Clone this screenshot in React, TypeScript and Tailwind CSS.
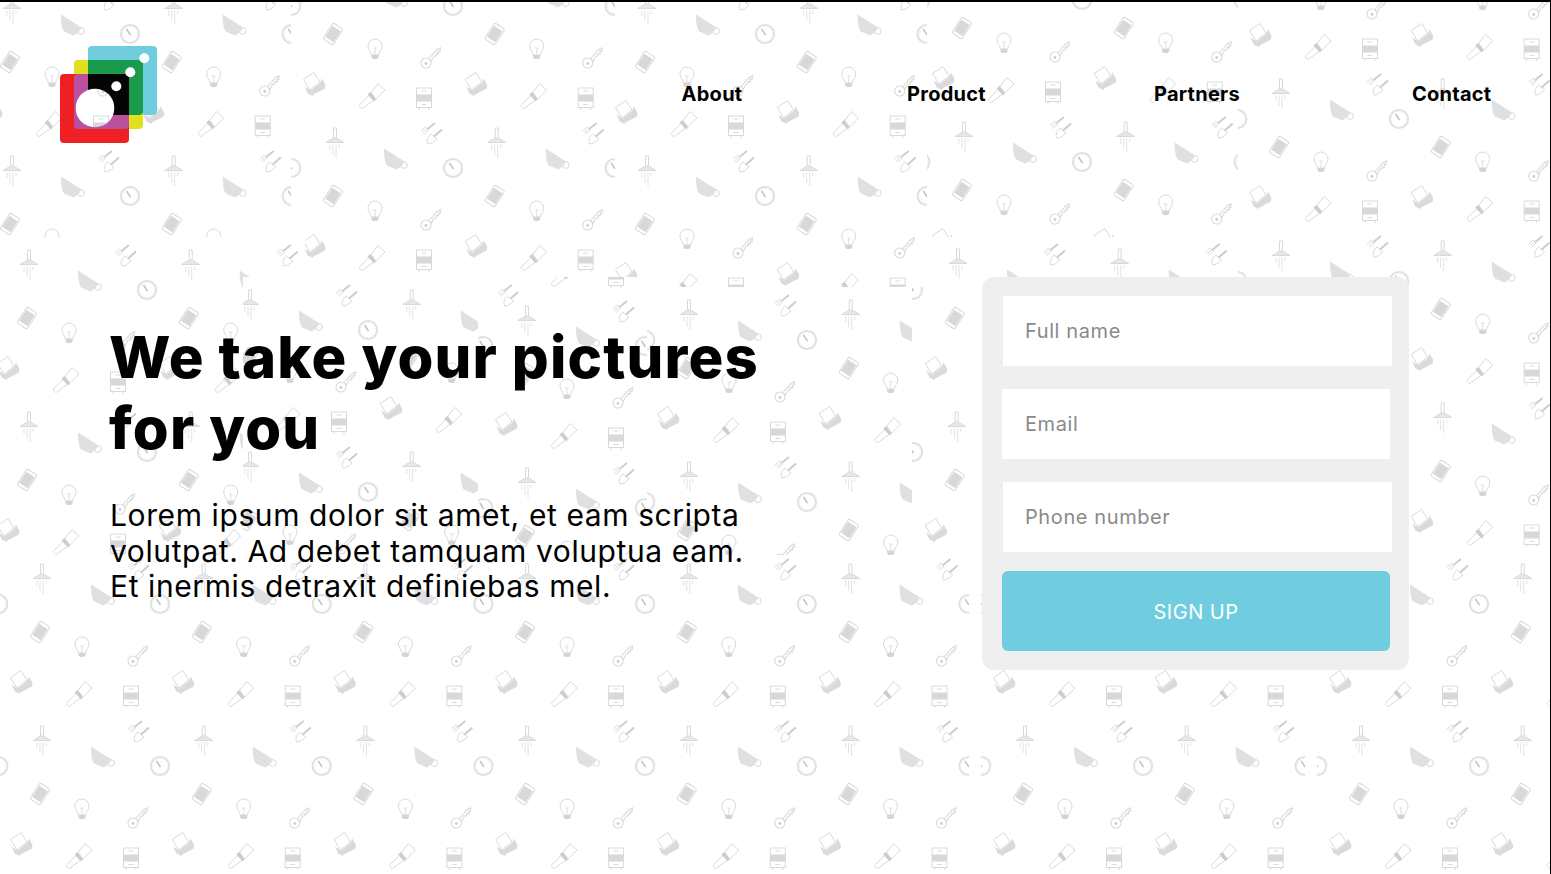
const PERIOD_X = 161.7;
const PERIOD_Y = 162;

// x0, y0, x1, y1, gaugeX, gaugeY: the wallpaper is pieced together, each patch has its own offset
const patches = [
  [0, 0, 291, 237, 130, 34],
  [0, 237, 305, 277, 147, 290],
  [0, 277, 243, 555, 147, 290],
  [291, 0, 615, 237, 453, 6],
  [305, 237, 615, 277, 453, 6],
  [243, 277, 478, 555, 368, 330],
  [478, 277, 518, 312, 368, 330],
  [518, 277, 647, 555, 645, 346],
  [478, 312, 518, 555, 645, 346],
  [615, 0, 647, 277, 765, 34],
  [647, 0, 927, 287, 765, 34],
  [647, 287, 912, 555, 807, 340],
  [912, 287, 968, 555, 913, 452],
  [927, 0, 1238, 237, 1082, 162],
  [927, 237, 1238, 287, 1076, 289],
  [1238, 0, 1551, 553, 1399, 119],
  [0, 555, 969, 874, 160, 766],
  [981, 553, 1305, 874, 1143, 766],
  [1317, 553, 1551, 874, 1479, 766],
];

const tileIcons: [string, number, number][] = [
  ["gauge", 0, 0],
  ["cup", -58, -9],
  ["phone", -120, -134],
  ["bulb", -78, -119],
  ["key", -22, -110],
  ["printer", -139, -84],
  ["brush", -81, -72],
  ["fridge", -29, -70],
  ["shower", -118, -29],
  ["garden", -22, -34],
];

const FILL = "#dcddde";
const LINE = "#d4d5d7";

function IconDefs() {
  return (
    <defs>
      <g id="gauge" fill="none">
        <circle r="9.2" stroke={FILL} strokeWidth="1.8" fill="#fff" />
        <circle r="7.6" stroke={LINE} strokeWidth="0.6" strokeDasharray="1 1.4" />
        <path d="M-3.5 -5 L0.5 1" stroke="#b9babc" strokeWidth="1.4" />
      </g>
      <g id="cup">
        <circle cx="9" cy="6" r="3.4" fill="#fff" stroke={LINE} strokeWidth="1" />
        <path d="M-11 -10.5 L9.5 2.5 C8 6 4.5 9 1.5 10.5 L-8 6.5 C-10.5 2.5 -11 -3.5 -11 -10.5Z" fill={FILL} />
      </g>
      <g id="phone" transform="rotate(33)">
        <rect x="-6" y="-9.5" width="12" height="19" rx="1.8" fill="#fff" stroke={LINE} strokeWidth="1" />
        <rect x="-5" y="-6.5" width="10" height="13" fill="#d3d4d6" />
      </g>
      <g id="bulb">
        <path d="M-3.5 6 C-4 2.5 -7 1 -7 -3 A7 7 0 1 1 7 -3 C7 1 4 2.5 3.5 6Z" fill="#fff" stroke={LINE} strokeWidth="1" />
        <path d="M0 6 V-1 M-1.8 -1 H1.8" stroke={LINE} strokeWidth="0.8" fill="none" />
        <path d="M-3.5 6 H3.5 V8.5 L2 10 H-2 L-3.5 8.5Z" fill="#cfd0d2" />
      </g>
      <g id="key" fill="#fff" stroke={LINE} strokeWidth="1.1">
        <path d="M-2.5 1 L6 -8.5 L9.5 -10 L9 -6.5 L7.2 -6.8 L7.6 -4.2 L5.2 -4.6 L5.2 -2 L3 -2 L0.5 3Z" />
        <circle cx="-5" cy="5" r="5" />
        <circle cx="-5" cy="5.5" r="1.4" fill="#c9cacc" stroke="none" />
      </g>
      <g id="printer">
        <path d="M-9.5 2.5 L-3.5 6.5 L6 -1 L8 -5.5 L11.5 1 L11 4.5 L-0.5 10.5 L-1.5 12 L-4 10.5 L-6 10Z" fill="#d6d7d8" />
        <path d="M-10.5 -4.5 L0 -11.5 L6 -2 L-4 6Z" fill="#fff" stroke={LINE} strokeWidth="1" />
      </g>
      <g id="brush">
        <path d="M-3.5 0 L-12 8.5 C-13.5 10 -11 13.5 -9 12 L1 4.5" fill="#fff" stroke={LINE} strokeWidth="1" />
        <path d="M-4.5 -1.5 L-1 -4.5 L5 2 L2 5.5Z" fill="#c6c7c9" />
        <path d="M-1 -3.5 L6 -12.5 L13 -6 L4 3Z" fill="#fff" stroke={LINE} strokeWidth="1" />
      </g>
      <g id="fridge">
        <rect x="-7.5" y="-10" width="15" height="19.5" fill="#fff" stroke={LINE} strokeWidth="1" />
        <rect x="-7.5" y="-3.5" width="15" height="7" fill="#d3d4d6" />
        <path d="M-2.5 -7 H2.5 M-2.5 6.5 H2.5 M-5 9.5 V12 M5 9.5 V12" stroke={LINE} strokeWidth="0.9" />
      </g>
      <g id="shower" fill="none" stroke={LINE} strokeWidth="1">
        <path d="M-1.5 -1 V-11 H1.5 V-1" fill="#fff" />
        <path d="M-9 3.5 L-1.5 -1 H1.5 L9 3.5Z" fill="#e4e5e6" />
        <path d="M-5 5.5 V11 M-2 5.5 V16 M1 5.5 V19 M4 5.5 V9" strokeWidth="0.8" />
      </g>
      <g id="garden" fill="none">
        <path d="M-5.5 -7 L-10 -3 M-4 -5.5 L-8.5 -1 M-2.5 -4 L-7 0.5 M-5.5 -7 L-2.5 -4" stroke="#cfd0d2" strokeWidth="0.9" />
        <path d="M-3.5 -5 L4 -11" stroke="#c6c7c9" strokeWidth="1.8" />
        <path d="M-3 10 C-5 7 -3 2 0 0 L6 5 C3 8 0 10 -3 10Z" fill="#fff" stroke={LINE} strokeWidth="1" />
        <path d="M3 2.5 L11 -4.5" stroke="#c6c7c9" strokeWidth="2" />
      </g>
    </defs>
  );
}

function Wallpaper() {
  return (
    <svg className="absolute left-0 top-[-2px] opacity-90" width="1551" height="874" viewBox="0 0 1551 874">
      <IconDefs />
      {patches.map(([x0, y0, x1, y1, gx, gy], p) => {
        const uses = [];
        for (let i = -11; i <= 11; i++) {
          for (let j = -6; j <= 6; j++) {
            for (const [id, ox, oy] of tileIcons) {
              const x = gx + ox + i * PERIOD_X;
              const y = gy + oy + j * PERIOD_Y;
              if (x < x0 - 25 || x > x1 + 25 || y < y0 - 25 || y > y1 + 25) continue;
              uses.push(<use key={`${id}${i}_${j}`} href={`#${id}`} x={x} y={y} />);
            }
          }
        }
        return (
          <g key={p}>
            <clipPath id={`patch${p}`}>
              <rect x={x0} y={y0} width={x1 - x0} height={y1 - y0} />
            </clipPath>
            <g clipPath={`url(#patch${p})`}>{uses}</g>
          </g>
        );
      })}
    </svg>
  );
}

function Logo() {
  return (
    <svg width="97" height="97" viewBox="60 46 97 97">
      <mask id="holes">
        <rect x="60" y="46" width="97" height="97" fill="#fff" />
        <circle cx="95" cy="108" r="19.3" fill="#000" />
        <circle cx="116.3" cy="86.3" r="5" fill="#000" />
        <circle cx="130.3" cy="72.3" r="5" fill="#000" />
        <circle cx="144.3" cy="58.3" r="5" fill="#000" />
      </mask>
      <g mask="url(#holes)">
        <rect x="88" y="46" width="69" height="69" rx="4" fill="#6fcddd" />
        <rect x="74" y="60" width="69" height="69" rx="4" fill="#e0e01f" />
        <rect x="60" y="74" width="69" height="69" rx="4" fill="#ee2024" />
        <path d="M88 60 H143 V111 a4 4 0 0 1 -4 4 H88Z" fill="#1a9a4b" />
        <path d="M78 74 H129 V125 a4 4 0 0 1 -4 4 H78 a4 4 0 0 1 -4 -4 V78 a4 4 0 0 1 4 -4Z" fill="#b9519e" />
        <path d="M88 74 H125 a4 4 0 0 1 4 4 V115 H88Z" fill="#050505" />
      </g>
    </svg>
  );
}

const inputClass =
  "block h-[69.5px] bg-white text-[20px] font-normal tracking-[0.6px] text-[#8a8a8a] placeholder:text-[#8a8a8a] outline-none";

export default function App() {
  return (
    <div className="relative h-[874px] w-[1551px] overflow-hidden border-t-2 border-r border-black bg-white font-['Inter',sans-serif] text-black">
      <Wallpaper />
      <div className="relative flex flex-col">
        <header className="flex items-start pl-[60px] pt-[44px]">
          <Logo />
          <nav className="ml-[524px] mt-[34px] flex text-[20px] font-bold leading-[28px] tracking-[0.25px]">
            <a className="w-[62px] text-center">About</a>
            <a className="ml-[164px] w-[79px] text-center">Product</a>
            <a className="ml-[168px] w-[84px] text-center">Partners</a>
            <a className="ml-[174px] w-[78px] text-center">Contact</a>
          </nav>
        </header>
        <main className="mt-[134px] flex items-start">
          <section className="ml-[109px] w-[711px] pt-[45px]">
            <h1 className="text-[58px] font-extrabold leading-[71px] tracking-[1.15px]">We take your pictures<br />for you</h1>
            <p className="ml-[1px] mt-[34px] text-[30px] font-normal leading-[35.5px] tracking-[0.6px]">
              Lorem ipsum dolor sit amet, et eam scripta<br />
              volutpat. Ad debet tamquam voluptua eam.<br />
              Et inermis detraxit definiebas mel.
            </p>
          </section>
          <form className="ml-[162px] flex h-[393px] w-[427px] flex-col rounded-[12px] bg-[#efefef] pl-[20px] pt-[19px]">
            <input className={`${inputClass} ml-[1px] w-[389px] px-[22px]`} placeholder="Full name" />
            <input className={`${inputClass} mt-[23.5px] w-[388px] px-[23px]`} placeholder="Email" />
            <input className={`${inputClass} ml-[1px] mt-[23.5px] w-[389px] px-[22px]`} placeholder="Phone number" />
            <button type="button" className="mt-[19px] h-[80px] w-[388px] rounded-[6px] bg-[#70cde0] pt-[2px] text-[20px] font-normal tracking-[0.5px] text-white">
              SIGN UP
            </button>
          </form>
        </main>
      </div>
    </div>
  );
}
